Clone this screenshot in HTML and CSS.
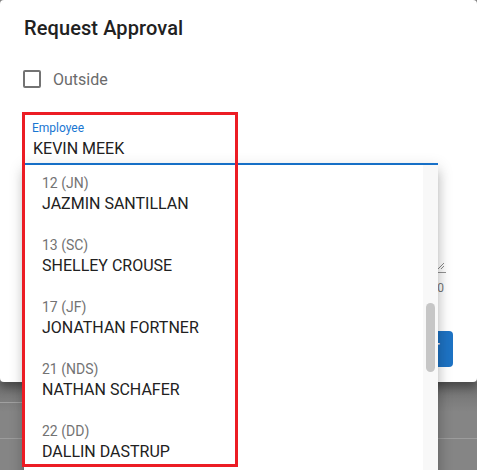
FILE: index.html
```html
<!DOCTYPE html>
<html>
<head>
<meta charset="utf-8">
<link rel="stylesheet" href="styles.css">
</head>
<body>
<div class="dialog">
  <h2 class="title">Request Approval</h2>
  <label class="check-row">
    <span class="box"></span>
    <span class="check-label">Outside</span>
  </label>
  <div class="field">
    <div class="field-label">Employee</div>
    <div class="field-input">KEVIN MEEK</div>
  </div>
  <div class="textarea">
    <svg class="resize" width="8" height="8" viewBox="0 0 8 8"><path d="M7 1 L1 7 M7 4 L4 7" stroke="#8a8a8a" stroke-width="1" fill="none"/></svg>
  </div>
  <div class="counter">0</div>
  <div class="actions">
    <button class="btn">REQUEST</button>
  </div>

  <div class="menu">
    <div class="item"><div class="code">12 (JN)</div><div class="name">JAZMIN SANTILLAN</div></div>
    <div class="item"><div class="code">13 (SC)</div><div class="name">SHELLEY CROUSE</div></div>
    <div class="item"><div class="code">17 (JF)</div><div class="name">JONATHAN FORTNER</div></div>
    <div class="item"><div class="code">21 (NDS)</div><div class="name">NATHAN SCHAFER</div></div>
    <div class="item"><div class="code">22 (DD)</div><div class="name">DALLIN DASTRUP</div></div>
    <div class="track"><div class="thumb"></div></div>
  </div>
  <div class="highlight"></div>
</div>
<div class="backdrop">
  <div class="bd-cell"></div>
</div>
</body>
</html>
```

FILE: styles.css
```css
* { box-sizing: border-box; }
html, body { margin: 0; padding: 0; }
body {
  width: 477px;
  height: 470px;
  overflow: hidden;
  background: #858585;
  font-family: Roboto, "Liberation Sans", sans-serif;
}
.dialog {
  position: relative;
  width: 477px;
  height: 382px;
  background: #fff;
  border-radius: 4px;
  padding: 12px 24px 15px;
  display: flex;
  flex-direction: column;
  box-shadow: 0 6px 10px rgba(0,0,0,0.35);
  z-index: 1;
}
.title {
  margin: 0;
  font-size: 20px;
  font-weight: 500;
  line-height: 32px;
  color: #212121;
  letter-spacing: 0.1px;
}
.check-row {
  margin-top: 15px;
  height: 40px;
  display: flex;
  align-items: center;
  gap: 12px;
}
.box {
  width: 18px;
  height: 18px;
  margin-left: -1px;
  border: 2px solid #737373;
  border-radius: 2px;
}
.check-label {
  font-size: 16px;
  color: #6b6b6b;
}
.field {
  margin-top: 21px;
  width: 414px;
  padding-left: 8px;
  border-bottom: 2px solid #1976d2;
}
.field-label {
  font-size: 12px;
  line-height: 16px;
  color: #1976d2;
}
.field-input {
  font-size: 16px;
  line-height: 24px;
  padding: 1px 0 2px 1px;
  color: #212121;
}
.textarea {
  margin-top: 28px;
  width: 422px;
  height: 80px;
  border-bottom: 1px solid #949494;
  position: relative;
}
.resize {
  position: absolute;
  right: 1px;
  bottom: 2px;
}
.counter {
  width: 422px;
  margin-top: 7px;
  text-align: right;
  font-size: 12px;
  line-height: 16px;
  color: #777;
  padding-right: 2px;
}
.actions {
  margin-top: 35px;
  display: flex;
  justify-content: flex-end;
}
.btn {
  height: 36px;
  border: 0;
  border-radius: 4px;
  background: #1e73c4;
  color: #fff;
  font-family: Roboto, "Liberation Sans", sans-serif;
  font-size: 14px;
  font-weight: 500;
  letter-spacing: 1.2px;
  padding: 0 12px 0 16px;
}
.menu {
  position: absolute;
  left: 24px;
  top: 165px;
  width: 414px;
  height: 320px;
  background: #fff;
  padding-left: 18px;
  box-shadow: 0 5px 5px -3px rgba(0,0,0,.2), 0 8px 10px 1px rgba(0,0,0,.14), 0 3px 14px 2px rgba(0,0,0,.12);
  z-index: 2;
}
.item {
  padding: 8px 0 12px;
  height: 62px;
}
.code {
  font-size: 14px;
  line-height: 20px;
  color: #737373;
}
.name {
  font-size: 16px;
  line-height: 22px;
  color: #212121;
}
.track {
  position: absolute;
  right: 0;
  top: 0;
  width: 15px;
  height: 100%;
  background: #f8f8f8;
}
.thumb {
  position: absolute;
  left: 3px;
  top: 138px;
  width: 9px;
  height: 69px;
  border-radius: 5px;
  background: #c6c6c6;
}
.highlight {
  position: absolute;
  left: 22px;
  top: 112px;
  width: 216px;
  height: 355px;
  border: 3px solid #ec1c24;
  z-index: 3;
}
.backdrop {
  height: 57px;
  border-bottom: 1px solid #9c9c9c;
  background: linear-gradient(#6f6f6f, #858585 30px);
}
.bd-cell {
  width: 30px;
  height: 21px;
  border-bottom: 1px solid #a0a0a0;
}
```
